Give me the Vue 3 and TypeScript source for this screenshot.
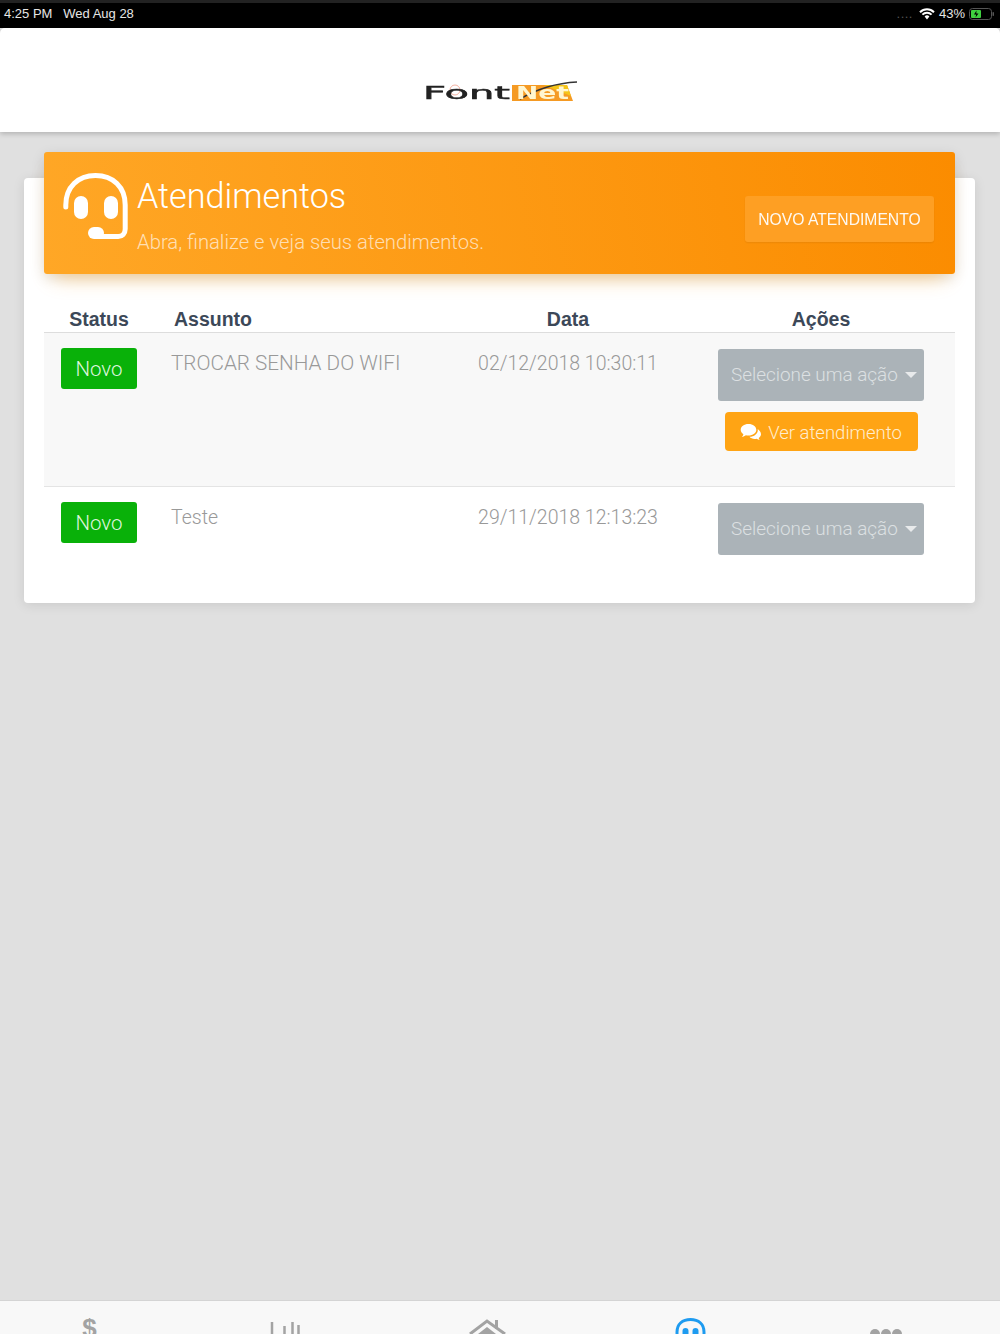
<script setup lang="ts">
interface Ticket {
  assunto: string
  data: string
  ver: boolean
  caps: boolean
}
const tickets: Ticket[] = [
  { assunto: 'TROCAR SENHA DO WIFI', data: '02/12/2018 10:30:11', ver: true, caps: true },
  { assunto: 'Teste', data: '29/11/2018 12:13:23', ver: false, caps: false },
]
</script>

<template>
  <div class="page">
    <div class="statusbar">
      <span class="time">4:25 PM&nbsp;&nbsp; Wed Aug 28</span>
      <span class="status-right">
        <span class="signal">....</span>
        <svg class="wifi" width="16" height="12" viewBox="0 0 16 12">
          <path d="M1 4.200a10 10 0 0 1 14 0M3.400 6.600a6.600 6.600 0 0 1 9.200 0" fill="none" stroke="#fff" stroke-width="2" />
          <path d="M5.600 8.400a3.400 3.400 0 0 1 4.800 0L8 11.400z" fill="#fff" />
        </svg>
        <span>43%</span>
        <svg class="battery" width="26" height="12" viewBox="0 0 26 12">
          <rect x="0.500" y="0.500" width="22" height="11" rx="3" fill="none" stroke="#555" />
          <rect x="2" y="2" width="10" height="8" rx="1" fill="#3fd13f" />
          <path d="M7.500 2.500 5 6.500h2.200L6.500 9.500 9.500 5.500H7.300z" fill="#000" />
          <rect x="23.500" y="4" width="1.500" height="4" rx="0.700" fill="#555" />
        </svg>
      </span>
    </div>

    <header class="topbar">
      <svg class="logo" width="156" height="26" viewBox="0 0 156 26">
        <path d="M90 5h55l6 16H90z" fill="#f59a23" />
        <path d="M122 5h23l4 11z" fill="#f5c518" />
        <path d="M98 19C115 9 135 3 155 2" fill="none" stroke="#333" stroke-width="1.500" />
        <circle cx="33" cy="10" r="5" fill="none" stroke="#f3b0a0" stroke-width="1" />
        <text x="1" y="19" class="logo-font" textLength="87" lengthAdjust="spacingAndGlyphs">Font</text>
        <text x="94" y="19" class="logo-net" textLength="53" lengthAdjust="spacingAndGlyphs">Net</text>
      </svg>
    </header>

    <main class="content">
      <section class="card">
        <div class="card-head">
          <svg class="headset" width="68" height="68" viewBox="0 0 68 68">
            <path
              d="M2.800 34V32C2.800 14 15 2.500 32.500 2.500S62.200 14 62.200 32v24c0 4.500-3 7.500-7 7.500H36"
              fill="none"
              stroke="#fff"
              stroke-width="5"
              stroke-linecap="round"
            />
            <rect x="11" y="23" width="14" height="23" rx="7" fill="#fff" />
            <rect x="41" y="23" width="14" height="23" rx="7" fill="#fff" />
            <rect x="25" y="54" width="16" height="12" rx="6" fill="#fff" />
          </svg>
          <div class="head-text">
            <h1>Atendimentos</h1>
            <p>Abra, finalize e veja seus atendimentos.</p>
          </div>
          <button class="novo">NOVO ATENDIMENTO</button>
        </div>

        <div class="table">
          <div class="thead">
            <div class="th center">Status</div>
            <div class="th assunto">Assunto</div>
            <div class="th center">Data</div>
            <div class="th center">Ações</div>
          </div>
          <div v-for="(t, i) in tickets" :key="t.data" class="row" :class="{ odd: i === 0 }">
            <div class="cell status"><span class="badge">Novo</span></div>
            <div class="cell text" :class="{ caps: t.caps }">{{ t.assunto }}</div>
            <div class="cell text center">{{ t.data }}</div>
            <div class="cell actions">
              <div class="select">Selecione uma ação<i class="caret"></i></div>
              <button v-if="t.ver" class="ver">
                <svg width="22" height="18" viewBox="0 0 22 18">
                  <path d="M8.500 1C4 1 .7 3.600.7 6.800c0 1.800 1 3.400 2.700 4.500-.2 1-.8 1.900-1.500 2.600 1.500-.1 2.900-.7 4-1.600.8.200 1.700.300 2.600.300 4.500 0 7.800-2.600 7.800-5.800S13 1 8.500 1z" fill="#fff" />
                  <path d="M17.700 6c.1.300.1.600.1.900 0 3.800-3.700 6.700-8.300 6.900 1.100 1.300 3 2.100 5.100 2.100.7 0 1.400-.1 2-.2.900.7 2 1.200 3.300 1.300-.6-.6-1-1.300-1.200-2.100 1.400-.9 2.300-2.200 2.300-3.700 0-2-1.300-3.700-3.300-5.200z" fill="#fff" />
                </svg>
                <span>Ver atendimento</span>
              </button>
            </div>
          </div>
        </div>
      </section>
    </main>

    <nav class="tabbar">
      <div class="tabs">
        <div class="tab dollar">$</div>
        <div class="tab">
          <svg width="40" height="20" viewBox="0 0 40 20">
            <path d="M3 8v12M15.500 12v8M23.500 8v12M29.500 11v9" fill="none" stroke="#a3a3a3" stroke-width="2.500" />
          </svg>
        </div>
        <div class="tab">
          <svg width="38" height="20" viewBox="0 0 38 20">
            <path d="M1 20 18 7l18 13" fill="none" stroke="#a3a3a3" stroke-width="3" />
            <path d="M26 6h3v9h-3z" fill="#a3a3a3" />
            <path d="M18 13l9 7H9z" fill="#a3a3a3" />
          </svg>
        </div>
        <div class="tab">
          <svg width="40" height="20" viewBox="0 0 40 20">
            <path d="M10 20V18C10 10 15.500 5.500 23.500 5.500S37 10 37 18v2" fill="none" stroke="#1e9bf0" stroke-width="3" />
            <rect x="15.500" y="14" width="6" height="10" rx="3" fill="#1e9bf0" />
            <rect x="25.500" y="14" width="6" height="10" rx="3" fill="#1e9bf0" />
          </svg>
        </div>
        <div class="tab">
          <svg width="32" height="20" viewBox="0 0 32 20">
            <circle cx="5" cy="20" r="5" fill="#a3a3a3" />
            <circle cx="16" cy="20" r="5" fill="#a3a3a3" />
            <circle cx="27" cy="20" r="5" fill="#a3a3a3" />
          </svg>
        </div>
      </div>
    </nav>
  </div>
</template>

<style scoped>
.page {
  width: 1000px;
  height: 1334px;
  overflow: hidden;
  display: flex;
  flex-direction: column;
  background: #e0e0e0;
  font-family: "Liberation Sans", Arial, sans-serif;
}
.statusbar {
  height: 28px;
  flex: none;
  box-sizing: border-box;
  border-top: 3px solid #222;
  padding: 0 5px 4px 4px;
  background: #000;
  color: #e6e6e6;
  font-size: 13px;
  display: flex;
  justify-content: space-between;
  align-items: center;
}
.status-right {
  display: flex;
  align-items: center;
  gap: 4px;
}
.signal {
  color: #555;
  letter-spacing: 0.500px;
  margin-right: 2px;
}
.topbar {
  height: 104px;
  flex: none;
  background: #fff;
  border-radius: 5px 5px 0 0;
  box-shadow: 0 2px 5px rgba(0, 0, 0, 0.2);
  display: flex;
  justify-content: center;
  align-items: flex-start;
  padding-top: 52px;
  box-sizing: border-box;
  position: relative;
}
.logo {
  filter: blur(0.700px);
}
.logo-font {
  font: 400 17px "DejaVu Sans", sans-serif;
  fill: #222;
  stroke: #222;
  stroke-width: 0.500px;
}
.logo-net {
  font: 700 17px "DejaVu Sans", sans-serif;
  fill: #fff6d0;
}
.content {
  flex: 1;
  padding: 46px 25px 0 24px;
}
.card {
  height: 425px;
  background: #fff;
  border-radius: 4px;
  box-shadow: 0 2px 12px rgba(0, 0, 0, 0.1);
  padding: 0 20px;
}
.card-head {
  position: relative;
  top: -26px;
  height: 122px;
  margin-bottom: -26px;
  box-sizing: border-box;
  border-radius: 3px;
  background: linear-gradient(80deg, #ffa726, #fb8c00);
  box-shadow: 0 12px 20px -10px rgba(255, 152, 0, 0.45), 0 4px 14px rgba(0, 0, 0, 0.12);
  display: flex;
  align-items: flex-start;
  padding: 21px 21px 0 19px;
  color: #fff;
}
.headset {
  flex: none;
  margin-right: 6px;
}
.head-text {
  flex: 1;
}
h1 {
  margin: 0;
  font: 300 34.200px/46px Roboto, sans-serif;
}
p {
  margin: 11px 0 0;
  font: 300 20.250px/24px Roboto, sans-serif;
  color: rgba(255, 255, 255, 0.68);
}
.novo {
  margin-top: 23px;
  width: 189px;
  height: 46px;
  border: 0;
  padding: 2px 0 0;
  border-radius: 3px;
  background: #ffa025;
  color: #fff;
  opacity: 0.95;
  box-shadow: 0 1px 2px rgba(0, 0, 0, 0.08);
  font: 15.700px "Liberation Sans", sans-serif;
}
.table {
  margin-top: 31px;
  color: #3c4858;
}
.thead,
.row {
  display: grid;
  grid-template-columns: 110px 295px 238px 268px;
}
.thead {
  height: 28px;
  border-bottom: 1px solid #ddd;
  box-sizing: border-box;
}
.th {
  font-size: 19.500px;
  font-weight: 700;
  line-height: 28px;
}
.th.assunto {
  padding-left: 20px;
}
.center {
  text-align: center;
}
.row {
  border-bottom: 1px solid #e4e4e4;
  box-sizing: border-box;
  height: 154px;
}
.row:last-child {
  border-bottom: 0;
  height: 100px;
}
.row.odd {
  background: #f8f8f8;
}
.cell {
  padding-top: 16px;
}
.status {
  text-align: center;
  padding-top: 15px;
}
.badge {
  display: inline-block;
  width: 76px;
  height: 41px;
  border-radius: 3px;
  background: #09b109;
  color: #dff5df;
  font: 300 20.500px/43px Roboto, sans-serif;
}
.text {
  padding-left: 17px;
  font: 300 19.500px/30px Roboto, sans-serif;
  color: #999;
}
.text.caps {
  font-size: 20.700px;
  line-height: 28px;
}
.text.center {
  padding-left: 0;
}
.actions {
  display: flex;
  flex-direction: column;
  align-items: center;
  gap: 11px;
}
.select {
  width: 206px;
  height: 52px;
  box-sizing: border-box;
  padding-left: 13px;
  border-radius: 3px;
  background: #abb3b8;
  color: #dce0e2;
  font: 300 18.900px/52px Roboto, sans-serif;
  position: relative;
  white-space: nowrap;
}
.caret {
  position: absolute;
  right: 7px;
  top: 23px;
  width: 0;
  height: 0;
  border-left: 6px solid transparent;
  border-right: 6px solid transparent;
  border-top: 6px solid #e8eaeb;
}
.ver {
  width: 193px;
  height: 39px;
  border: 0;
  padding: 2px 0 0;
  box-sizing: border-box;
  border-radius: 4px;
  background: #ffa414;
  color: #ffedcf;
  font: 300 18.500px/24px Roboto, sans-serif;
  display: flex;
  align-items: center;
  justify-content: center;
  gap: 6px;
}
.ver svg {
  margin-top: -2px;
}
.tabbar {
  height: 34px;
  flex: none;
  background: #f8f8f8;
  border-top: 1px solid #d4d4d4;
  box-sizing: border-box;
  overflow: hidden;
}
.tabs {
  margin-left: -10px;
  display: grid;
  grid-template-columns: repeat(5, 199px);
}
.tab {
  height: 33px;
  display: flex;
  justify-content: center;
  padding-top: 13px;
  box-sizing: border-box;
}
.dollar {
  color: #a3a3a3;
  font: 700 26px/28px "Liberation Sans", sans-serif;
  padding-top: 13px;
}
</style>
